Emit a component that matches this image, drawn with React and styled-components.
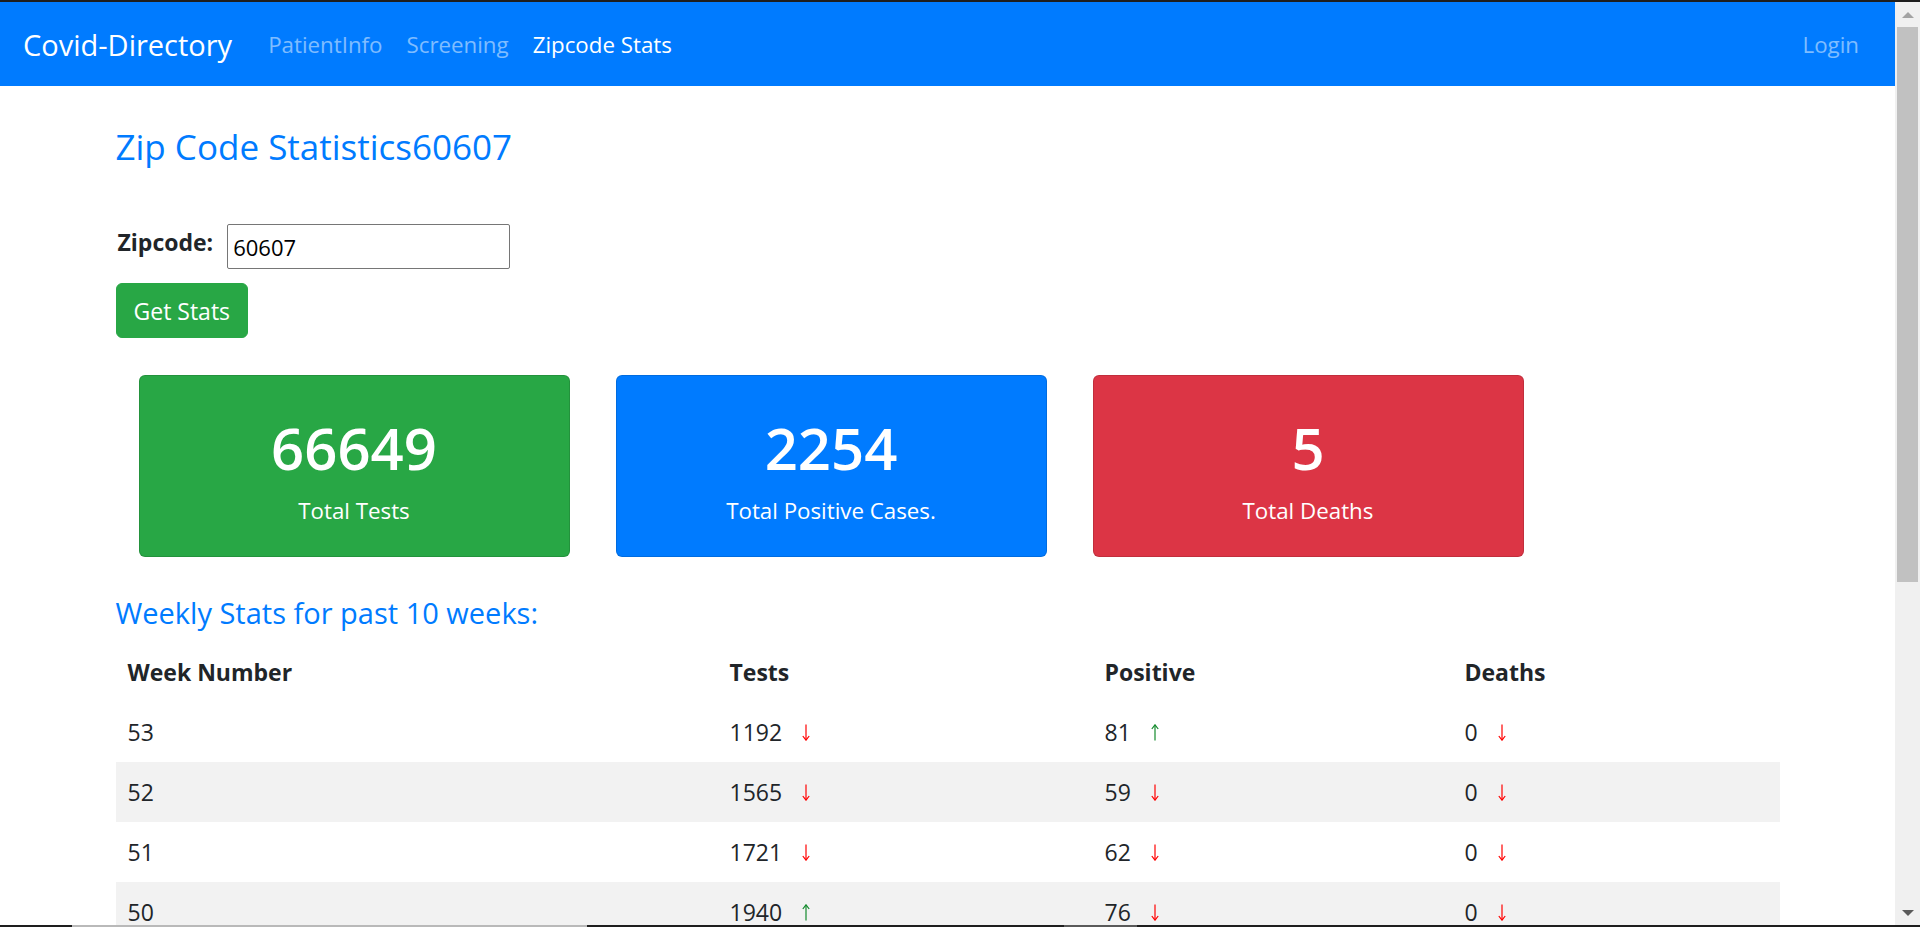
import React from "react";
import styled, { createGlobalStyle } from "styled-components";

const GlobalStyle = createGlobalStyle`
  html, body { margin: 0; padding: 0; height: 100%; overflow: hidden; }
  body {
    font-family: "Open Sans", "Noto Sans", sans-serif;
    color: #212529;
    background: #ffffff;
  }
  #root { height: 100%; }
  * { box-sizing: border-box; }
`;

const Frame = styled.div`
  width: 1920px;
  height: 927px;
  display: flex;
  flex-direction: column;
  overflow: hidden;
  background: #ffffff;
`;

const EdgeTop = styled.div`
  height: 2px;
  flex-shrink: 0;
  background: #1e1e1e;
`;

const EdgeBottom = styled.div`
  height: 2px;
  flex-shrink: 0;
  display: flex;
  background: #1e1e1e;
`;

const EdgeSeg = styled.div`
  width: ${(p) => p.$w}px;
  background: ${(p) => p.$c};
`;

const Body = styled.div`
  flex: 1;
  min-height: 0;
  display: flex;
`;

const Viewport = styled.div`
  flex: 1;
  min-width: 0;
  overflow: hidden;
  display: flex;
  flex-direction: column;
`;

const Navbar = styled.nav`
  height: 84px;
  flex-shrink: 0;
  background: #007bff;
  display: flex;
  align-items: center;
  padding: 0 24px 0 23px;
`;

const Brand = styled.a`
  font-size: 29px;
  color: #ffffff;
  text-decoration: none;
  margin-right: 24px;
  white-space: nowrap;
`;

const NavList = styled.div`
  display: flex;
  align-items: center;
  flex: 1;
`;

const NavLink = styled.a`
  font-size: 22.3px;
  padding: 0 12px;
  color: ${(p) => (p.$active ? "#ffffff" : "rgba(255,255,255,0.5)")};
  text-decoration: none;
  white-space: nowrap;
`;

const Main = styled.main`
  width: 1664px;
  margin: 0 auto;
  display: flex;
  flex-direction: column;
  align-items: flex-start;
`;

const Title = styled.h3`
  margin: 40px 0 0;
  font-size: 35px;
  line-height: 42px;
  font-weight: 400;
  color: #007bff;
`;

const FieldRow = styled.div`
  margin-top: 56px;
  display: flex;
  align-items: flex-start;
  gap: 14px;
`;

const FieldLabel = styled.label`
  font-size: 23px;
  line-height: 36px;
  font-weight: 700;
  padding-left: 2px;
`;

const Input = styled.input`
  width: 283px;
  height: 45px;
  border: 1px solid #767676;
  border-radius: 2px;
  padding: 0 5px;
  font-family: inherit;
  font-size: 22px;
  color: #000000;
  outline: none;
`;

const Button = styled.button`
  margin-top: 14px;
  border: 1px solid #28a745;
  background: #28a745;
  color: #ffffff;
  border-radius: 6px;
  padding: 9px 17px 8px;
  font-family: inherit;
  font-size: 23px;
  line-height: 36px;
  cursor: pointer;
`;

const CardRow = styled.div`
  margin-top: 37px;
  padding-left: 23px;
  display: flex;
  gap: 46px;
`;

const StatCard = styled.div`
  width: 431px;
  height: 182px;
  background: ${(p) => p.$bg};
  border: 1px solid rgba(0, 0, 0, 0.12);
  border-radius: 6px;
  color: #ffffff;
  display: flex;
  flex-direction: column;
  align-items: center;
  padding-top: 36px;
`;

const StatValue = styled.div`
  font-size: 58px;
  line-height: 72px;
  font-weight: 600;
`;

const StatLabel = styled.div`
  margin-top: 9px;
  font-size: 22.3px;
  line-height: 36px;
`;

const SectionTitle = styled.h5`
  margin: 38px 0 0;
  font-size: 29px;
  line-height: 36px;
  font-weight: 400;
  color: #007bff;
`;

const Table = styled.div`
  margin-top: 11px;
  width: 1664px;
  display: flex;
  flex-direction: column;
`;

const Row = styled.div`
  display: grid;
  grid-template-columns: 602px 375px 360px 327px;
  background: ${(p) => (p.$striped ? "#f2f2f2" : "transparent")};
`;

const HeadCell = styled.div`
  padding: 12px;
  font-size: 23px;
  line-height: 36px;
  font-weight: 700;
`;

const Cell = styled.div`
  padding: 12px;
  font-size: 23px;
  line-height: 36px;
  display: flex;
  align-items: center;
`;

const ArrowWrap = styled.span`
  display: inline-flex;
  margin-left: 20px;
  color: ${(p) => (p.$up ? "#138a2c" : "#ff0000")};
`;

const Trend = ({ up }) => (
  <ArrowWrap $up={up}>
    <svg width="8" height="17" viewBox="0 0 8 17" fill="none" stroke="currentColor" strokeWidth="1.2">
      {up ? (
        <>
          <line x1="4" y1="1" x2="4" y2="16.5" />
          <polyline points="0.8,5 4,0.8 7.2,5" />
        </>
      ) : (
        <>
          <line x1="4" y1="0.5" x2="4" y2="16" />
          <polyline points="0.8,12 4,16.2 7.2,12" />
        </>
      )}
    </svg>
  </ArrowWrap>
);

const Scrollbar = styled.div`
  width: 25px;
  flex-shrink: 0;
  background: #f0f0f0;
  display: flex;
  flex-direction: column;
  align-items: center;
`;

const ScrollBtn = styled.div`
  height: 25px;
  width: 100%;
  flex-shrink: 0;
  display: flex;
  align-items: center;
  justify-content: center;
`;

const Caret = styled.div`
  width: 0;
  height: 0;
  border-left: 6px solid transparent;
  border-right: 6px solid transparent;
  ${(p) =>
    p.$down
      ? "border-top: 6px solid #5a5a5a;"
      : "border-bottom: 6px solid #a3a3a3;"}
`;

const Thumb = styled.div`
  width: 21px;
  height: 555px;
  flex-shrink: 0;
  background: #c1c1c1;
`;

const Track = styled.div`
  flex: 1;
`;

const weeks = [
  { week: 53, tests: 1192, tUp: false, pos: 81, pUp: true, deaths: 0, dUp: false },
  { week: 52, tests: 1565, tUp: false, pos: 59, pUp: false, deaths: 0, dUp: false },
  { week: 51, tests: 1721, tUp: false, pos: 62, pUp: false, deaths: 0, dUp: false },
  { week: 50, tests: 1940, tUp: true, pos: 76, pUp: false, deaths: 0, dUp: false },
];

const cards = [
  { value: "66649", label: "Total Tests", bg: "#28a745" },
  { value: "2254", label: "Total Positive Cases.", bg: "#007bff" },
  { value: "5", label: "Total Deaths", bg: "#dc3545" },
];

export default function App() {
  return (
    <Frame>
      <GlobalStyle />
      <EdgeTop />
      <Body>
        <Viewport>
          <Navbar>
            <Brand href="#">Covid-Directory</Brand>
            <NavList>
              <NavLink href="#">PatientInfo</NavLink>
              <NavLink href="#">Screening</NavLink>
              <NavLink href="#" $active>Zipcode Stats</NavLink>
            </NavList>
            <NavLink href="#">Login</NavLink>
          </Navbar>
          <Main>
            <Title>Zip Code Statistics60607</Title>
            <FieldRow>
              <FieldLabel htmlFor="zip">Zipcode:</FieldLabel>
              <Input id="zip" defaultValue="60607" />
            </FieldRow>
            <Button>Get Stats</Button>
            <CardRow>
              {cards.map((c) => (
                <StatCard key={c.label} $bg={c.bg}>
                  <StatValue>{c.value}</StatValue>
                  <StatLabel>{c.label}</StatLabel>
                </StatCard>
              ))}
            </CardRow>
            <SectionTitle>Weekly Stats for past 10 weeks:</SectionTitle>
            <Table>
              <Row>
                <HeadCell>Week Number</HeadCell>
                <HeadCell>Tests</HeadCell>
                <HeadCell>Positive</HeadCell>
                <HeadCell>Deaths</HeadCell>
              </Row>
              {weeks.map((w, i) => (
                <Row key={w.week} $striped={i % 2 === 1}>
                  <Cell>{w.week}</Cell>
                  <Cell>
                    {w.tests}
                    <Trend up={w.tUp} />
                  </Cell>
                  <Cell>
                    {w.pos}
                    <Trend up={w.pUp} />
                  </Cell>
                  <Cell>
                    {w.deaths}
                    <Trend up={w.dUp} />
                  </Cell>
                </Row>
              ))}
            </Table>
          </Main>
        </Viewport>
        <Scrollbar>
          <ScrollBtn>
            <Caret />
          </ScrollBtn>
          <Thumb />
          <Track />
          <ScrollBtn>
            <Caret $down />
          </ScrollBtn>
        </Scrollbar>
      </Body>
      <EdgeBottom>
        <EdgeSeg $w={72} $c="#1e1e1e" />
        <EdgeSeg $w={515} $c="#b9b9b9" />
        <EdgeSeg $w={477} $c="#1e1e1e" />
        <EdgeSeg $w={73} $c="#5a5a5a" />
      </EdgeBottom>
    </Frame>
  );
}
